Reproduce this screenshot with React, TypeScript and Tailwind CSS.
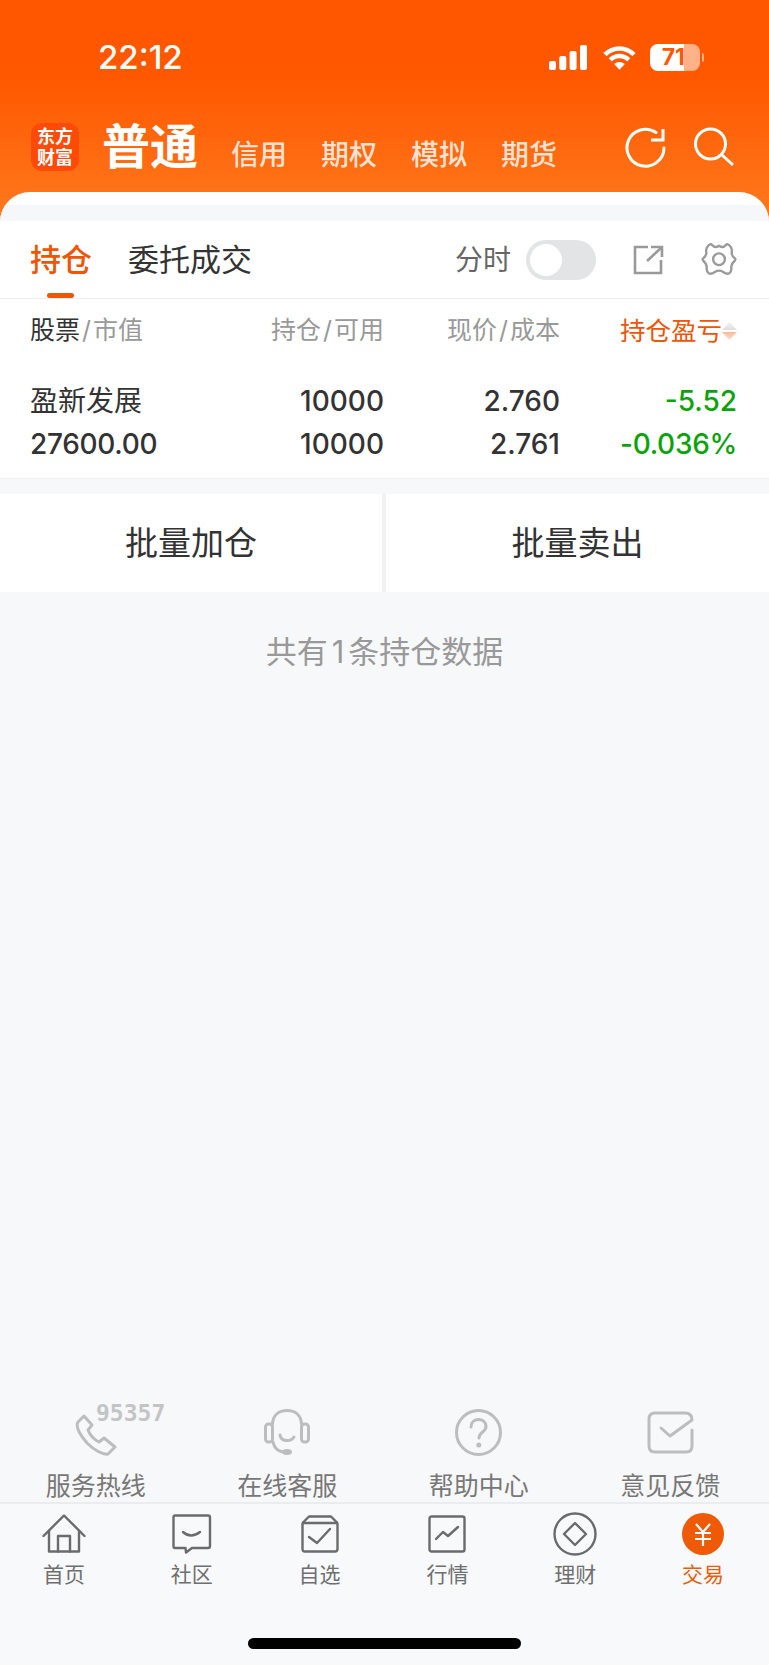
import React from "react";

const IconProps = { fill: "none", strokeLinecap: "round", strokeLinejoin: "round" } as const;

function Signal() {
  return (
    <svg width="38" height="25" viewBox="0 0 38 25" fill="#fff">
      <rect x="0" y="16" width="7" height="9" rx="2" />
      <rect x="10.300" y="11" width="7" height="14" rx="2" />
      <rect x="20.600" y="6" width="7" height="19" rx="2" />
      <rect x="31" y="0" width="7" height="25" rx="2" />
    </svg>
  );
}

function Wifi() {
  return (
    <svg width="33" height="25" viewBox="0 0 34 25" fill="none" stroke="#fff" strokeWidth="4.600">
      <path d="M2 9.500C10.500 1 23.500 1 32 9.500" />
      <path d="M7.500 15C13 9.600 21 9.600 26.500 15" />
      <path d="M11.500 19.300C14.600 16.500 19.400 16.500 22.500 19.300L17 25Z" fill="#fff" stroke="none" />
    </svg>
  );
}

function Refresh() {
  return (
    <svg width="41" height="41" viewBox="0 0 41 41" {...IconProps} stroke="#fff" strokeWidth="3">
      <path d="M39 21A18.500 18.500 0 1 1 31 5.500" />
      <path d="M38 2V13H26" strokeLinecap="butt" strokeLinejoin="miter" />
    </svg>
  );
}

function Search() {
  return (
    <svg width="41" height="40" viewBox="0 0 41 40" {...IconProps} stroke="#fff" strokeWidth="3">
      <circle cx="16.500" cy="17" r="15" />
      <path d="M28 28L39 38" strokeLinecap="butt" />
    </svg>
  );
}

function ExportIcon() {
  return (
    <svg width="31" height="30" viewBox="0 0 31 30" fill="none" stroke="#9a9a9a" strokeWidth="2.600">
      <path d="M15 2H2V28H28V15" />
      <path d="M14 16L28 3" />
      <path d="M18 2H29V12" />
    </svg>
  );
}

function Gear() {
  return (
    <svg width="36" height="35" viewBox="0 0 35 34.500" {...IconProps} stroke="#9a9a9a" strokeWidth="2.300">
      <path d="M17.500 3.700Q21.500 6.500 24 3.200Q26.500 0.500 29.500 5.500Q30.500 8 30 10.250Q30 14 33 16Q34.500 17 33 18.500Q30 21 29.500 24.500Q30.500 28.500 27.500 31Q24 32 21.500 29.500Q17.500 27 13.500 29.500Q11 32 7.500 31Q4.500 28.500 5.500 24.500Q5 21 2 18.500Q0.500 17 2 16Q5 14 5 10.250Q4.500 8 5.500 5.500Q8.500 0.500 11 3.200Q13.500 6.500 17.500 3.700Z" />
      <circle cx="17.500" cy="17" r="5.800" />
    </svg>
  );
}

function SortArrows() {
  return (
    <svg width="15" height="18" viewBox="0 0 15 18">
      <defs>
        <linearGradient id="sortup" x1="0" y1="0" x2="0" y2="1">
          <stop offset="0" stopColor="#f4f4f4" />
          <stop offset="1" stopColor="#dddddd" />
        </linearGradient>
        <linearGradient id="sortdown" x1="0" y1="0" x2="0" y2="1">
          <stop offset="0" stopColor="#fbb898" />
          <stop offset="1" stopColor="#fce0d0" />
        </linearGradient>
      </defs>
      <path d="M7.500 0L15 8H0Z" fill="url(#sortup)" />
      <path d="M0 10H15L7.500 18Z" fill="url(#sortdown)" />
    </svg>
  );
}

const gray = "#bdbdbd";

function PhoneIcon() {
  return (
    <svg width="42" height="44" viewBox="0 -2 42 44" className="mt-[4px]" {...IconProps} stroke={gray} strokeWidth="3">
      <path d="M9 2L3 8C0 13 6 22 12 29C19 36 28 41 33 40L40 33L29 24L24 28C20 26 15 21 13 16L17 11Z" />
    </svg>
  );
}

function HeadsetIcon() {
  return (
    <svg width="46" height="46" viewBox="0 0 46 46" {...IconProps} stroke={gray} strokeWidth="3">
      <path d="M8.500 15C9 6 15 1.500 23 1.500C31 1.500 37 6 37.500 15" />
      <rect x="1.500" y="15" width="7" height="18" rx="3" />
      <rect x="37.500" y="15" width="7" height="18" rx="3" />
      <path d="M9 33C10 38 13 42 19 43" />
      <path d="M16 26C17 33 27 33 30 28" />
      <ellipse cx="23" cy="43" rx="3.500" ry="1.500" fill={gray} />
    </svg>
  );
}

function QuestionIcon() {
  return (
    <svg width="47" height="47" viewBox="0 0 47 47" {...IconProps} stroke={gray} strokeWidth="3">
      <circle cx="23.500" cy="23.500" r="22" />
      <path d="M16 18C16 8 31 8 31 17.500C31 23 24 23 24 29" />
      <circle cx="23.800" cy="36" r="1" fill={gray} />
    </svg>
  );
}

function MailIcon() {
  return (
    <svg width="47" height="43" viewBox="0 0 47 43" {...IconProps} stroke={gray} strokeWidth="3">
      <path d="M14 17L23 25L45 9Q45 2 38 2H8Q2 2 2 8V35Q2 41 8 41H39Q45 41 45 35V19" />
    </svg>
  );
}

const nav = "#6b6b6b";

function HomeIcon() {
  return (
    <svg width="44" height="40" viewBox="0 0 44 40" {...IconProps} stroke={nav} strokeWidth="2.400">
      <path d="M1.500 22L22 1.500L42.500 22" />
      <path d="M7 17V37.500H37V17" />
      <path d="M16 37.500V22H28V37.500" />
    </svg>
  );
}

function ChatIcon() {
  return (
    <svg width="40" height="40" viewBox="0 0 40 40" {...IconProps} stroke={nav} strokeWidth="2.400">
      <path d="M3 1.500H36Q38 1.500 38 3.500V32Q38 34 36 34H20L14 38.500L13.500 34H3Q1.500 34 1.500 32V3.500Q1.500 1.500 3 1.500Z" />
      <path d="M11 18Q19 25 28 18" />
    </svg>
  );
}

function StarBoxIcon() {
  return (
    <svg width="38" height="38" viewBox="0 0 38 38" {...IconProps} stroke={nav} strokeWidth="2.400">
      <path d="M1.500 9Q1.500 7 3.500 6L8 1.500H30L34.500 6Q36.500 7 36.500 9V34Q36.500 36.500 34 36.500H4Q1.500 36.500 1.500 34Z" />
      <path d="M2 8H36" />
      <path d="M8 22L16 28L29 14" />
    </svg>
  );
}

function ChartIcon() {
  return (
    <svg width="38" height="38" viewBox="0 0 38 38" {...IconProps} stroke={nav} strokeWidth="2.400">
      <rect x="1.500" y="1.500" width="35" height="35" rx="2" />
      <path d="M8 24L15 17L20 21L30 12" />
    </svg>
  );
}

function DiamondIcon() {
  return (
    <svg width="44" height="44" viewBox="0 0 44 44" {...IconProps} stroke={nav} strokeWidth="2.400">
      <circle cx="22" cy="22" r="20.500" />
      <path d="M22 11L33 22L22 33L11 22Z" />
    </svg>
  );
}

function YuanIcon() {
  return (
    <svg width="42" height="42" viewBox="0 0 42 42">
      <circle cx="21" cy="21" r="21" fill="#ee5a06" />
      <g fill="none" stroke="#fff" strokeWidth="2.200">
        <path d="M14 11L21 19L28 11" />
        <path d="M13 20H29M13 26H29M21 19V33" />
      </g>
    </svg>
  );
}

function Shortcut({ icon, label, children }: { icon: React.ReactNode; label: string; children?: React.ReactNode }) {
  return (
    <div className="relative flex flex-col items-center">
      <div className="flex h-[52px] items-center justify-center">{icon}</div>
      {children}
      <div className="mt-[13px] h-[31px] text-[25px] leading-[30px] text-[#777777]">{label}</div>
    </div>
  );
}

function NavItem({ icon, label, active }: { icon: React.ReactNode; label: string; active?: boolean }) {
  return (
    <div className="flex flex-col items-center">
      <div className="flex h-[44px] items-center justify-center">{icon}</div>
      <div className={`mt-[6px] text-[21px] leading-[26px] ${active ? "text-[#ee5a06]" : "text-[#6f6f6f]"}`}>{label}</div>
    </div>
  );
}

function Pair({ a, b }: { a: string; b: string }) {
  return (
    <div className="text-right">
      {a}
      <span className="mx-[2px]">/</span>
      {b}
    </div>
  );
}

export default function App() {
  return (
    <div className="flex h-[1665px] w-full flex-col overflow-hidden bg-[#f7f8fa] font-['Inter','Noto_Sans_CJK_SC',sans-serif]">
      {/* orange header */}
      <header className="h-[222px] bg-[linear-gradient(to_bottom,#ff5600_0%,#ff5800_35%,#ff7a1e_100%)] px-[31px] text-white">
        <div className="flex h-[117px] items-center pb-[3px] pl-[67px] pr-[34px]">
          <span className="text-[33px] font-medium leading-none">22:12</span>
          <div className="ml-auto flex items-center gap-[16px]">
            <Signal />
            <Wifi />
            <div className="-ml-[2px] flex items-center gap-[2px]">
              <div className="flex h-[27px] w-[50px] items-center justify-end rounded-[8px] bg-[linear-gradient(to_right,#ffffff_68%,#ffffff88_68%)] pr-[15px] text-[23px] font-bold leading-none text-[#ff5600]">
                71
              </div>
              <div className="h-[9px] w-[2px] rounded-r-full bg-[#ffffff88]" />
            </div>
          </div>
        </div>
        <div className="flex h-[60px] items-center">
          <div className="flex h-[48px] w-[48px] flex-col items-center justify-center rounded-[11px] bg-[#ff4a08] text-[18px] font-bold leading-[21px] text-white">
            <span>东方</span>
            <span>财富</span>
          </div>
          <span className="ml-[23px] text-[48px] font-semibold leading-none">普通</span>
          <div className="ml-[33px] mt-[15px] flex gap-[34px] text-[28px] font-medium leading-none text-[#ffffffd0]">
            <span>信用</span>
            <span>期权</span>
            <span>模拟</span>
            <span>期货</span>
          </div>
          <div className="ml-auto mr-[3px] flex items-center gap-[28px]">
            <Refresh />
            <Search />
          </div>
        </div>
      </header>

      {/* card */}
      <main className="relative -mt-[30px] overflow-hidden rounded-t-[30px] bg-white pt-[13px]">
        <div className="h-[16px] bg-[#f5f7fa]" />
        <div className="flex h-[78px] items-center border-b border-[#eeeeee] pl-[30px] pr-[32px]">
          <div className="relative flex h-full items-center text-[31px] font-medium leading-none text-[#ee5506]">
            持仓
            <div className="absolute bottom-0 left-[17px] h-[5px] w-[27px] rounded-full bg-[#ee5506]" />
          </div>
          <span className="ml-[36px] text-[31px] leading-none text-[#333333]">委托成交</span>
          <span className="ml-auto text-[28px] leading-none text-[#666666]">分时</span>
          <div className="ml-[15px] flex h-[40px] w-[70px] items-center rounded-full bg-[#e3e4e6] pl-[4px]">
            <div className="h-[32px] w-[32px] rounded-full bg-white" />
          </div>
          <div className="ml-[37px]">
            <ExportIcon />
          </div>
          <div className="ml-[37px]">
            <Gear />
          </div>
        </div>

        <div className="grid h-[63px] grid-cols-[190px_164px_176px_177px] items-center pl-[30px] pr-[32px] text-[25px] leading-none text-[#999999]">
          <div>
            <span className="text-[#333333]">股票</span>
            <span className="mx-[2px]">/</span>
            <span>市值</span>
          </div>
          <Pair a="持仓" b="可用" />
          <Pair a="现价" b="成本" />
          <div className="flex items-center justify-end text-[25.500px] text-[#ee5506]">
            <span>持仓盈亏</span>
            <SortArrows />
          </div>
        </div>

        <div className="grid h-[117px] grid-cols-[190px_164px_176px_177px] content-start gap-y-[13px] border-b border-[#eeeeee] pl-[30px] pr-[32px] pt-[24px] text-[28px] font-medium leading-[30px] text-[#333333]">
          <div className="font-normal">盈新发展</div>
          <div className="text-right">10000</div>
          <div className="text-right">2.760</div>
          <div className="text-right text-[#0aa30a]">-5.52</div>
          <div className="tracking-[-0.3px]">27600.00</div>
          <div className="text-right">10000</div>
          <div className="text-right">2.761</div>
          <div className="text-right tracking-[-0.3px] text-[#0aa30a]">-0.036%</div>
        </div>
      </main>

      <div className="mt-[15px] grid h-[98px] grid-cols-[382px_1fr] gap-[4px] bg-[#f1f2f4]">
        <div className="flex items-center justify-center bg-white text-[33px] leading-none text-[#333333]">批量加仓</div>
        <div className="flex items-center justify-center bg-white text-[33px] leading-none text-[#333333]">批量卖出</div>
      </div>

      <div className="mt-[41px] text-center text-[31px] leading-[38px] text-[#999999]">
        共有<span className="mx-[4px]">1</span>条持仓数据
      </div>

      {/* shortcuts */}
      <div className="mt-auto grid grid-cols-4 border-b-2 border-[#ebecee] pr-[3px]">
        <Shortcut icon={<PhoneIcon />} label="服务热线">
          <span className="absolute left-[96px] top-[-5px] font-['DejaVu_Sans_Mono',monospace] text-[23px] font-bold leading-[24px] text-[#c4c4c4]">
            95357
          </span>
        </Shortcut>
        <Shortcut icon={<HeadsetIcon />} label="在线客服" />
        <Shortcut icon={<QuestionIcon />} label="帮助中心" />
        <Shortcut icon={<MailIcon />} label="意见反馈" />
      </div>

      {/* bottom nav */}
      <nav className="flex h-[161px] flex-col bg-[#f8f9fb] pt-[8px]">
        <div className="grid grid-cols-6 pr-[2px]">
          <NavItem icon={<HomeIcon />} label="首页" />
          <NavItem icon={<ChatIcon />} label="社区" />
          <NavItem icon={<StarBoxIcon />} label="自选" />
          <NavItem icon={<ChartIcon />} label="行情" />
          <NavItem icon={<DiamondIcon />} label="理财" />
          <NavItem icon={<YuanIcon />} label="交易" active />
        </div>
        <div className="mx-auto mb-[16px] mt-auto h-[11px] w-[273px] rounded-full bg-black" />
      </nav>
    </div>
  );
}
